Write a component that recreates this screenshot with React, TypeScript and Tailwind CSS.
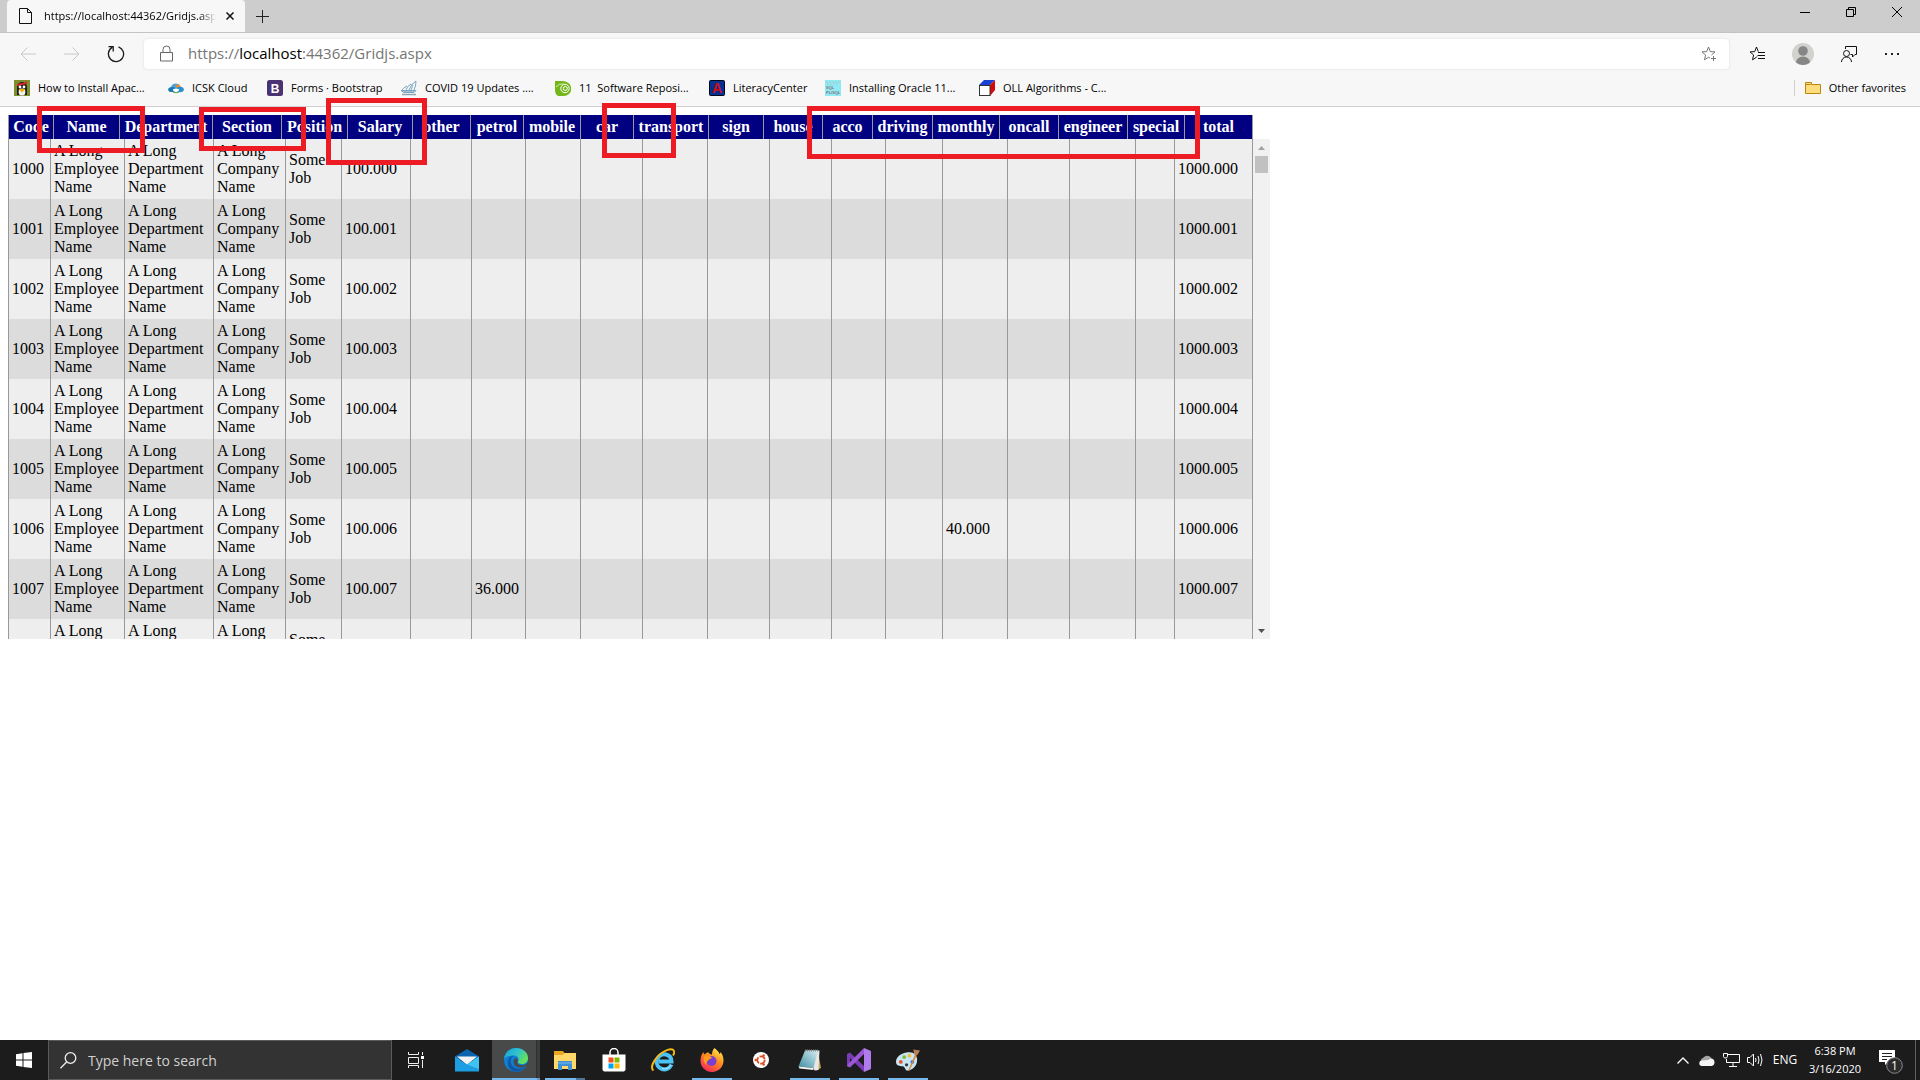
import React from 'react';

type Column = { label: string; head: string; body: string };

// header and body are separate tables, each with its own column widths
const columns: Column[] = [
  { label: 'Code', head: 'w-[45px]', body: 'w-[42px]' },
  { label: 'Name', head: 'w-[66px]', body: 'w-[74px]' },
  { label: 'Department', head: 'w-[93px]', body: 'w-[89px]' },
  { label: 'Section', head: 'w-[69px]', body: 'w-[72px]' },
  { label: 'Position', head: 'w-[66px]', body: 'w-[56px]' },
  { label: 'Salary', head: 'w-[65px]', body: 'w-[69px]' },
  { label: 'other', head: 'w-[58px]', body: 'w-[61px]' },
  { label: 'petrol', head: 'w-[53px]', body: 'w-[54px]' },
  { label: 'mobile', head: 'w-[57px]', body: 'w-[55px]' },
  { label: 'car', head: 'w-[53px]', body: 'w-[62px]' },
  { label: 'transport', head: 'w-[75px]', body: 'w-[65px]' },
  { label: 'sign', head: 'w-[55px]', body: 'w-[62px]' },
  { label: 'house', head: 'w-[59px]', body: 'w-[62px]' },
  { label: 'acco', head: 'w-[50px]', body: 'w-[54px]' },
  { label: 'driving', head: 'w-[60px]', body: 'w-[57px]' },
  { label: 'monthly', head: 'w-[67px]', body: 'w-[65px]' },
  { label: 'oncall', head: 'w-[59px]', body: 'w-[62px]' },
  { label: 'engineer', head: 'w-[69px]', body: 'w-[66px]' },
  { label: 'special', head: 'w-[57px]', body: 'w-[39px]' },
  { label: 'total', head: 'w-[69px]', body: 'w-[79px]' },
];

const rows = Array.from({ length: 9 }, (_, i) => {
  const values: Record<string, string> = {
    Code: `${1000 + i}`,
    Name: 'A Long Employee Name',
    Department: 'A Long Department Name',
    Section: 'A Long Company Name',
    Position: 'Some Job',
    Salary: `100.00${i}`,
    total: `1000.00${i}`,
  };
  if (i === 6) values.monthly = '40.000';
  if (i === 7) values.petrol = '36.000';
  return values;
});

const marks = [
  'left-[37px] top-[106px] w-[108px] h-[47px]',
  'left-[199px] top-[107px] w-[107px] h-[44px]',
  'left-[326px] top-[98px] w-[101px] h-[67px]',
  'left-[602px] top-[103px] w-[74px] h-[55px]',
  'left-[807px] top-[106px] w-[393px] h-[53px]',
];

const PenguinIcon = () => (
  <svg width="16" height="16" viewBox="0 0 16 16">
    <rect width="16" height="16" fill="#7d8f2a" />
    <path d="M3 15V7a5 5 0 0110 0v8z" fill="#1c1c1c" />
    <path d="M3 4l10-2v2L3 6z" fill="#d8262c" />
    <path d="M12 0l1 4-2 0z" fill="#d8262c" />
    <ellipse cx="8" cy="12" rx="3.4" ry="3.6" fill="#f2f2f2" />
    <circle cx="6" cy="7" r="1.4" fill="#fff" />
    <circle cx="10" cy="7" r="1.4" fill="#fff" />
    <path d="M4.5 9h7L8 12.500z" fill="#f5b301" />
  </svg>
);

const CloudLogo = () => (
  <svg width="16" height="16" viewBox="0 0 16 16">
    <path d="M3 8a4.5 4.5 0 018.5-2L8 10H3z" fill="#4aa3d8" />
    <path d="M7 6l4-2 2 3-3 2z" fill="#f08c2b" />
    <ellipse cx="4" cy="9.5" rx="3.8" ry="2.6" fill="#1679b8" />
    <ellipse cx="12" cy="9.5" rx="3.8" ry="2.7" fill="#2b8fd0" />
    <ellipse cx="8" cy="10" rx="3" ry="1.5" fill="#fff" />
    <path d="M5 12q3 1.5 6 0" stroke="#4b9b4a" fill="none" />
  </svg>
);

const BootstrapIcon = () => (
  <svg width="16" height="16" viewBox="0 0 16 16">
    <rect width="16" height="16" rx="2.5" fill="#4b3273" />
    <text x="8" y="12.5" fontSize="12" fontWeight="bold" fill="#fff" textAnchor="middle" fontFamily="Liberation Sans, sans-serif">B</text>
  </svg>
);

const ShipIcon = () => (
  <svg width="16" height="16" viewBox="0 0 16 16" fill="none" stroke="#7ea7bf">
    <path d="M15 1Q10 4 8 10M15 1Q15 6 13 10M10 4Q6 6 5 10M6 6Q2 8 1 10M11 4Q12 7 10 10" />
    <path d="M0 10.5h15l-2 2H3z" fill="#9fc0d2" />
    <path d="M1 14.5h14" stroke="#8ea6b4" strokeWidth="1.5" />
  </svg>
);

const EyeIcon = () => (
  <svg width="16" height="16" viewBox="0 0 16 16">
    <path d="M0 1h8q7 1 8 6v4q-2 5-8 5H3q-3-2-3-5z" fill="#74b71b" />
    <circle cx="10" cy="8.5" r="4.2" fill="none" stroke="#fff" />
    <circle cx="10.3" cy="8.5" r="2" fill="none" stroke="#fff" />
    <path d="M1 7q3-4 8-3" stroke="#d4edaa" fill="none" />
  </svg>
);

const LetterIcon = () => (
  <svg width="16" height="16" viewBox="0 0 16 16">
    <rect x=".5" y=".5" width="15" height="15" rx="1" fill="#06308f" stroke="#00061c" />
    <text x="8" y="13" fontSize="14" fontWeight="bold" fill="#d50b16" textAnchor="middle" fontFamily="Liberation Sans, sans-serif">A</text>
  </svg>
);

const SqlIcon = () => (
  <svg width="16" height="16" viewBox="0 0 16 16">
    <rect width="16" height="16" fill="#8eeaf5" />
    <path d="M1 2h14M2 4h12" stroke="#a9c9cf" strokeDasharray="2 1" />
    <text x="1" y="9" fontSize="4" fontWeight="bold" fill="#8b7377" fontFamily="Liberation Sans, sans-serif">SQL</text>
    <text x="1" y="14" fontSize="4" fontWeight="bold" fill="#8b7377" fontFamily="Liberation Sans, sans-serif">PL/SQL</text>
  </svg>
);

const CubeIcon = () => (
  <svg width="16" height="16" viewBox="0 0 16 16">
    <path d="M0 5L5 0h11l-5 5z" fill="#1b3fd1" />
    <path d="M11 5l5-5v10l-5 6z" fill="#d40a0a" />
    <rect x=".5" y="5.5" width="10.5" height="10" fill="#fff" stroke="#333" />
  </svg>
);

const bookmarks = [
  { label: 'How to Install Apac...', width: 'w-[154px]', icon: <PenguinIcon /> },
  { label: 'ICSK Cloud', width: 'w-[99px]', icon: <CloudLogo /> },
  { label: 'Forms · Bootstrap', width: 'w-[134px]', icon: <BootstrapIcon /> },
  { label: 'COVID 19 Updates ....', width: 'w-[154px]', icon: <ShipIcon /> },
  { label: '11  Software Reposi...', width: 'w-[154px]', icon: <EyeIcon /> },
  { label: 'LiteracyCenter', width: 'w-[116px]', icon: <LetterIcon /> },
  { label: 'Installing Oracle 11...', width: 'w-[154px]', icon: <SqlIcon /> },
  { label: 'OLL Algorithms - C...', width: 'w-[154px]', icon: <CubeIcon /> },
];

const TabStrip = () => (
  <div className="flex h-8 bg-[#cdcdcd] pl-[7px]">
    <div className="flex w-[238px] items-center rounded-t bg-[#f7f7f7] pl-3">
      <svg width="13" height="16" viewBox="0 0 13 16" fill="none" stroke="#111">
        <path d="M.5.5h8l4 4v11H.5zM8.5.5v4h4" />
      </svg>
      <div className="ml-3 w-[172px] overflow-hidden whitespace-nowrap text-[11px] text-black [mask-image:linear-gradient(to_right,black_90%,transparent)]">
        https://localhost:44362/Gridjs.aspx
      </div>
      <button aria-label="Close tab" className="ml-1.5 flex h-4 w-4 items-center justify-center">
        <svg width="8" height="8" viewBox="0 0 8 8" stroke="#111" strokeWidth="1.5">
          <path d="M.5.5l7 7M7.5.5l-7 7" />
        </svg>
      </button>
    </div>
    <button aria-label="New tab" className="flex w-[35px] items-center justify-center">
      <svg width="13" height="13" viewBox="0 0 13 13" stroke="#222">
        <path d="M6.5 0v13M0 6.5h13" />
      </svg>
    </button>
    <div className="ml-auto flex h-[23px]">
      <button aria-label="Minimize" className="flex w-[46px] items-center justify-center">
        <svg width="10" height="10" stroke="#000"><path d="M0 5.5h10" /></svg>
      </button>
      <button aria-label="Restore" className="flex w-[46px] items-center justify-center">
        <svg width="10" height="10" fill="none" stroke="#000">
          <path d="M.5 2.5h7v7h-7zM2.5 2V.5h7v7H8" />
        </svg>
      </button>
      <button aria-label="Close window" className="flex w-[46px] items-center justify-center">
        <svg width="10" height="10" stroke="#000"><path d="M0 0l10 10M10 0L0 10" /></svg>
      </button>
    </div>
  </div>
);

const Toolbar = () => (
  <div className="flex h-[42px] items-center border-t border-[#c3c3c3] bg-[#f7f7f7] pl-1.5 pr-2">
    <button aria-label="Back" className="flex w-11 justify-center">
      <svg width="16" height="14" viewBox="0 0 16 14" fill="none" stroke="#c8c8c8">
        <path d="M16 7H1M7.5.5L1 7l6.5 6.5" />
      </svg>
    </button>
    <button aria-label="Forward" className="flex w-11 justify-center">
      <svg width="16" height="14" viewBox="0 0 16 14" fill="none" stroke="#c8c8c8">
        <path d="M0 7h15M8.5.5L15 7l-6.5 6.5" />
      </svg>
    </button>
    <button aria-label="Refresh" className="flex w-11 justify-center">
      <svg width="18" height="18" viewBox="0 0 18 18" fill="none" stroke="#1b1b1b" strokeWidth="1.3">
        <path d="M11.5 1.8a7.600 7.600 0 11-6.300.6M1.500 1.700h4.700v4.700" />
      </svg>
    </button>
    <div className="ml-1.5 flex h-[30px] flex-1 items-center rounded bg-white pl-4 pr-3 shadow-[0_0_3px_#dddddd]">
      <svg width="13" height="17" viewBox="0 0 13 17" fill="none" stroke="#666">
        <path d="M.5 7.5h12V16H.5zM3 7V4.5a3.5 3.5 0 017 0V7" />
      </svg>
      <div className="ml-[15px] text-[15px] text-[#757575]">
        https://<span className="text-black">localhost</span>:44362/Gridjs.aspx
      </div>
      <button aria-label="Add to favorites" className="ml-auto">
        <svg width="16" height="16" viewBox="0 0 16 16" fill="none" stroke="#767676">
          <path d="M10.5 9L14 5.9l-4.700-.3L7.5 1 5.700 5.600 1 5.900 4.600 9l-1.100 4.800 4-2.600 1.500 1M12.5 10v5M10 12.500h5" />
        </svg>
      </button>
    </div>
    <div className="ml-[5px] flex items-center">
      <button aria-label="Favorites" className="flex w-[46px] justify-center">
        <svg width="16" height="16" viewBox="0 0 16 16" fill="none" stroke="#111">
          <path d="M8 10.5l-.5.7-4 2.600 1.100-4.800L1 5.900l4.700-.3L7.500 1l1.800 4.600M9 6.500h7M8.500 9.500H16M9 12.500h7" />
        </svg>
      </button>
      <button aria-label="Profile" className="flex w-[46px] justify-center">
        <svg width="22" height="22" viewBox="0 0 22 22">
          <circle cx="11" cy="11" r="11" fill="#d1d1ce" />
          <circle cx="11" cy="8" r="4.8" fill="#868686" />
          <path d="M4 19.500a7 6 0 0114 0A11 11 0 014 19.500z" fill="#868686" />
        </svg>
      </button>
      <button aria-label="Send feedback" className="flex w-[46px] justify-center">
        <svg width="16" height="16" viewBox="0 0 16 16" fill="none" stroke="#111">
          <circle cx="5.5" cy="7.5" r="3" />
          <path d="M.5 16a5 5 0 0110 0M4.5 3V.5h11v8H14L11.500 11V8.500H9.500" />
        </svg>
      </button>
      <button aria-label="Settings and more" className="flex w-10 justify-center">
        <svg width="14" height="2" fill="#222">
          <rect width="2" height="2" />
          <rect x="6" width="2" height="2" />
          <rect x="12" width="2" height="2" />
        </svg>
      </button>
    </div>
  </div>
);

const BookmarksBar = () => (
  <div className="flex h-[33px] items-start border-b border-[#d0d0d0] bg-[#f7f7f7] px-3.5 pt-1.5 text-[11px] text-black">
    {bookmarks.map((b) => (
      <a key={b.label} href="#" className={`flex h-4 items-center gap-2 whitespace-pre ${b.width}`}>
        {b.icon}
        {b.label}
      </a>
    ))}
    <a href="#" className="ml-auto flex h-4 items-center gap-2 border-l border-[#cfcfcf] pl-2.5">
      <svg width="16" height="12" viewBox="0 0 16 12" fill="#ffdc7d" stroke="#b8860b">
        <path d="M.5 2.5V.5h6v2h9v9H.5z" />
        <path d="M.5 2.5h5l1-1" fill="none" />
      </svg>
      Other favorites
    </a>
  </div>
);

const EmployeeGrid = () => (
  <div className="m-2 w-[1262px] font-['Liberation_Serif',serif] text-base leading-[18px] text-black">
    <table className="w-[1245px] table-fixed border-separate border-spacing-0 bg-[#000080]">
      <thead>
        <tr>
          {columns.map((c) => (
            <th key={c.label} className={`h-6 border-l border-[#999999] p-0 text-center font-bold text-white last:border-r ${c.head}`}>
              {c.label}
            </th>
          ))}
        </tr>
      </thead>
    </table>
    <div className="flex h-[500px] overflow-hidden">
      <table className="w-[1245px] shrink-0 table-fixed self-start border-separate border-spacing-0">
        <tbody>
          {rows.map((row) => (
            <tr key={row.Code} className="bg-[#eeeeee] even:bg-[#dcdcdc]">
              {columns.map((c) => (
                <td key={c.label} className={`h-[60px] border-l border-[#999999] p-[3px] align-middle last:border-r ${c.body}`}>
                  {row[c.label]}
                </td>
              ))}
            </tr>
          ))}
        </tbody>
      </table>
      <div className="flex w-[17px] flex-col items-center bg-[#f1f1f1]">
        <button aria-label="Scroll up" className="flex h-[17px] items-center">
          <svg width="7" height="4" fill="#a3a3a3"><path d="M0 4L3.5 0 7 4z" /></svg>
        </button>
        <div className="h-[17px] w-[13px] bg-[#c1c1c1]" />
        <button aria-label="Scroll down" className="mt-auto flex h-[17px] items-center">
          <svg width="7" height="4" fill="#505050"><path d="M0 0h7L3.5 4z" /></svg>
        </button>
      </div>
    </div>
  </div>
);

const MailIcon = () => (
  <svg width="24" height="24" viewBox="0 0 24 24">
    <path d="M0 8.5L12 1l12 7.5V12H0z" fill="#0b64b0" />
    <path d="M2 8.5h20L12 17z" fill="#f3f3f3" />
    <path d="M0 8.5l12 8 12-8v15H0z" fill="#1d9de2" />
    <path d="M12 16.5l12-8V21z" fill="#3fc3f2" />
  </svg>
);

const EdgeIcon = () => (
  <svg width="24" height="24" viewBox="0 0 24 24">
    <defs>
      <linearGradient id="edgeTop" x1="0" x2="1" y1="0" y2=".5">
        <stop offset="0" stopColor="#1a9fd8" />
        <stop offset=".55" stopColor="#2fc1cf" />
        <stop offset="1" stopColor="#66e05a" />
      </linearGradient>
    </defs>
    <circle cx="12" cy="12" r="12" fill="#0d7fd6" />
    <path d="M0 11C1 4 6 0 12 0c7 0 12 4.5 12 10 0 4-3 6-6 6-3.500 0-4.500-1.500-4-2.500 1.500-2 .5-6-4-6C5 7.500 1 9 0 11z" fill="url(#edgeTop)" />
    <path d="M10 7.600c-4 2-4.500 7-1.500 10.400 3 3.400 9 3.500 13.500.5-3 4-8 6-12 5C5 21.500 3 17 4 13c.8-3 3-5 6-5.400z" fill="#1457a0" />
    <path d="M13.500 14c-.5 2 2 3.500 5 3.300 2.500-.2 4.500-1.300 5.500-3.300v5l-2-.7c-3 1.800-8 2-11-.8-2-2-2-6 .5-7.500 2 .5 3 2.500 2 4z" fill="#484a4a" />
  </svg>
);

const FolderIcon = () => (
  <svg width="22" height="19" viewBox="0 0 22 19">
    <path d="M0 0h9l1.500 2H22v16H0z" fill="#e8a820" />
    <path d="M0 4h9l1.500-2H22v16H0z" fill="#ffd869" />
    <path d="M4 19v-9h14v9h-4v-4H8v4z" fill="#3f91d6" />
    <path d="M4 12h14" stroke="#7db9ec" />
  </svg>
);

const StoreIcon = () => (
  <svg width="24" height="24" viewBox="0 0 24 24">
    <path d="M8 7V4.500a4 4 0 018 0V7" fill="none" stroke="#fff" strokeWidth="1.5" />
    <path d="M.5 6.500h23V22L22 23.500H2L.5 22z" fill="#fff" />
    <path d="M6.500 9.500h5v5h-5z" fill="#f25022" />
    <path d="M12.500 9.500h5v5h-5z" fill="#7fba00" />
    <path d="M6.500 15.500h5v5h-5z" fill="#00a4ef" />
    <path d="M12.500 15.500h5v5h-5z" fill="#ffb900" />
  </svg>
);

const ExplorerIcon = () => (
  <svg width="24" height="24" viewBox="0 0 24 24" fill="none">
    <path d="M20.500 16.500C18.500 21 14 22 11 21c-4-1.300-6-5-5-9s5-6.500 9-5.500c4 1 5.500 4 5.500 7H8" stroke="#4cc2f5" strokeWidth="4" />
    <path d="M20 17C18 20.500 14 21.500 11 20.500" stroke="#c6f0ff" />
    <path d="M2.500 22.500C-2 19 5 8 13 3.500c5-3 9-3 10-.5.5 1.500 0 3-1 4.500" stroke="#f4b916" strokeWidth="2" />
  </svg>
);

const FirefoxIcon = () => (
  <svg width="24" height="24" viewBox="0 0 24 24">
    <defs>
      <linearGradient id="ffBody" x1=".8" x2=".2" y1="0" y2="1">
        <stop offset="0" stopColor="#fff04a" />
        <stop offset=".45" stopColor="#ff8a1f" />
        <stop offset="1" stopColor="#f3215f" />
      </linearGradient>
    </defs>
    <path d="M14.500 0c3 2.500 4.500 4 5 6 1-.5 1-2 1-2 2 2.500 3 5.500 3 8.500 0 6.500-5 11.500-11.500 11.500S.5 19 .5 13c0-4 1-7 3-9 0 1 .5 2 1 2.500C6 5 7 4.500 8.500 4.500c1 1.500 2 2 3.500 2 0-3 1-5 2.500-6.500z" fill="url(#ffBody)" />
    <circle cx="11.5" cy="13" r="5" fill="#7a3fd0" />
    <path d="M4.500 8c3-1 6 0 8 2-2 0-3 1-4.500 2.500-1 1-2 2.500-1.500 4.500C3 14 3.500 11 4.500 8z" fill="#ff9b1a" />
  </svg>
);

const UbuntuIcon = () => (
  <svg width="16" height="16" viewBox="0 0 16 16">
    <circle cx="8" cy="8" r="8" fill="#fff" />
    <circle cx="8" cy="8" r="3.7" fill="none" stroke="#df4b1f" strokeWidth="1.8" strokeDasharray="6.5 1.25" />
    <circle cx="2.8" cy="8" r="1.3" fill="#df4b1f" />
    <circle cx="10.6" cy="3.5" r="1.3" fill="#df4b1f" />
    <circle cx="10.6" cy="12.5" r="1.3" fill="#df4b1f" />
  </svg>
);

const NotepadIcon = () => (
  <svg width="24" height="24" viewBox="0 0 24 24">
    <defs>
      <linearGradient id="padPaper" x1="0" x2="1" y1="1" y2="0">
        <stop offset="0" stopColor="#3f8ea3" />
        <stop offset="1" stopColor="#d6edf2" />
      </linearGradient>
    </defs>
    <path d="M20 4l3 16-5 2.500z" fill="#c9a25c" />
    <path d="M8 2.500h13.500l-1 19.500-4 .5z" fill="#e8e8e8" />
    <path d="M7 2.500h13L15.500 20 .5 18.500z" fill="url(#padPaper)" />
    <path d="M7 2.500h13" stroke="#888" strokeWidth="2" strokeDasharray="1 1" />
    <path d="M.5 18.500l15 1.500v2l-14-1.500z" fill="#f2f2f2" />
  </svg>
);

const VisualStudioIcon = () => (
  <svg width="24" height="24" viewBox="0 0 24 24">
    <path d="M17 0l7 3v18l-7 3z" fill="#b07cec" />
    <path d="M0 6l3-1.500L17 18v6L3 10v7.500l-1 1.500-2-1z" fill="#7a3bb8" />
    <path d="M17 0v6L3 19.500 0 18l1-2z" fill="#9b57d8" />
  </svg>
);

const PaintIcon = () => (
  <svg width="24" height="24" viewBox="0 0 25 24">
    <path d="M12 4c6-1 10 2 10 8 0 7-6 11-10 11-3 0-2-4-5-4.500S0 18 0 14C0 9 5 5 12 4z" fill="#c9e4f2" />
    <circle cx="5" cy="14" r="2" fill="#e2572b" />
    <circle cx="8.5" cy="9" r="2" fill="#7abf3c" />
    <circle cx="14" cy="7.5" r="2" fill="#f1c232" />
    <circle cx="11" cy="17" r="1.7" fill="#2b3a44" />
    <circle cx="17" cy="14" r="2" fill="#3d7edb" />
    <path d="M20 6l1.500 1L14 23l-1.500.5z" fill="#d98a34" />
    <path d="M18 1l7 1-3 5-3-1z" fill="#b98056" />
  </svg>
);

// bar: underline of an open app, darker at the end when it has several windows
const apps = [
  { name: 'Mail', icon: <MailIcon />, cell: '', bar: '' },
  {
    name: 'Microsoft Edge',
    icon: <EdgeIcon />,
    cell: 'bg-[linear-gradient(to_right,#484a4a_44px,#2e2f2f_44px,#2e2f2f_45px,#3b3d3d_45px)]',
    bar: 'w-12 bg-[linear-gradient(to_right,#76b9ed_45px,#5f95c0_45px)]',
  },
  {
    name: 'File Explorer',
    icon: <FolderIcon />,
    cell: '',
    bar: 'w-10 bg-[linear-gradient(to_right,#76b9ed_31px,#4d7699_31px)]',
  },
  { name: 'Microsoft Store', icon: <StoreIcon />, cell: '', bar: '' },
  { name: 'Internet Explorer', icon: <ExplorerIcon />, cell: '', bar: '' },
  { name: 'Firefox', icon: <FirefoxIcon />, cell: '', bar: 'w-10 bg-[#76b9ed]' },
  { name: 'Ubuntu', icon: <UbuntuIcon />, cell: '', bar: '' },
  { name: 'Notepad', icon: <NotepadIcon />, cell: '', bar: 'w-10 bg-[#76b9ed]' },
  { name: 'Visual Studio', icon: <VisualStudioIcon />, cell: '', bar: 'w-10 bg-[#76b9ed]' },
  { name: 'Paint', icon: <PaintIcon />, cell: '', bar: 'w-10 bg-[#76b9ed]' },
];

const Taskbar = () => (
  <div className="flex h-10 bg-[#1c1c1c] text-white">
    <button aria-label="Start" className="flex w-12 items-center justify-center">
      <svg width="16" height="16" viewBox="0 0 16 16" fill="#fff">
        <path d="M0 2.2l6.500-.9v6.200H0zM7.500 1.100L16 0v7.500H7.500zM0 8.500h6.500v6.200L0 13.800zM7.500 8.500H16V16l-8.500-1.100z" />
      </svg>
    </button>
    <label className="flex w-[344px] items-center border border-[#5a5a5a] bg-[#333333] pl-[11px]">
      <svg width="17" height="17" viewBox="0 0 17 17" fill="none" stroke="#eee" strokeWidth="1.3">
        <circle cx="10.5" cy="6" r="5.3" />
        <path d="M6.800 9.800L.5 16.200" />
      </svg>
      <input
        type="text"
        aria-label="Search"
        placeholder="Type here to search"
        className="ml-[11px] flex-1 bg-transparent text-[14px] placeholder:text-[#d0d0d0]"
      />
    </label>
    <button aria-label="Task View" className="flex w-12 items-center justify-center">
      <svg width="16" height="16" viewBox="0 0 16 16" fill="none" stroke="#eee">
        <path d="M.5 0v2.500h10V0M.5 5.500h10v6H.5zM.5 16v-2.500h10V16M14.500 0v3M14.500 8v8" />
        <path d="M13 4h3v3h-3z" fill="#fff" stroke="none" />
      </svg>
    </button>
    <div className="ml-[3px] flex gap-px">
      {apps.map((app) => (
        <button key={app.name} aria-label={app.name} className={`flex w-12 flex-col items-center ${app.cell}`}>
          <span className="flex h-[38px] items-center pt-0.5">{app.icon}</span>
          {app.bar && <span className={`h-0.5 ${app.bar}`} />}
        </button>
      ))}
    </div>
    <div className="ml-auto flex items-center text-[11px] leading-[18px]">
      <button aria-label="Show hidden icons" className="flex w-6 justify-center">
        <svg width="12" height="7" fill="none" stroke="#fff" strokeWidth="1.3"><path d="M.5 6.500L6 1l5.500 5.500" /></svg>
      </button>
      <button aria-label="OneDrive" className="flex w-6 justify-center">
        <svg width="16" height="11" viewBox="0 0 16 11">
          <path d="M2 7a3 3 0 012-4 5 5 0 018-.5L13 6z" fill="#a5a5a5" />
          <path d="M3 11a2.700 2.700 0 010-5.400L9 5l3-1.500A3.800 3.800 0 0112.500 11z" fill="#f5f5f5" />
        </svg>
      </button>
      <button aria-label="Network" className="flex w-6 justify-center">
        <svg width="17" height="14" viewBox="0 0 17 14" fill="none" stroke="#fff">
          <path d="M5 1.500h11.500v8H3.500V6M10 9.500v4M6 13.500h8M.5.5h4v3l-1 1.500h-2L.5 3.500z" />
        </svg>
      </button>
      <button aria-label="Volume" className="flex w-6 justify-center">
        <svg width="17" height="14" viewBox="0 0 17 14" fill="none" stroke="#fff">
          <path d="M.5 4.500H3L6.500 1v12L3 9.500H.5zM8.500 5q1 2 0 4M11 3q2 4 0 8M13.500 1q3 6 0 12" />
        </svg>
      </button>
      <button className="w-9 text-[12px]">ENG</button>
      <button className="w-16 whitespace-nowrap text-center">
        6:38 PM
        <br />
        3/16/2020
      </button>
      <button aria-label="Notifications" className="flex h-10 w-12 items-center justify-center pt-1">
        <svg width="24" height="24" viewBox="0 0 24 24">
          <path d="M0 0h16v12H9l-3 3v-3H0z" fill="#fff" />
          <path d="M3 3.500h10M3 6.500h10M3 9.500h5" stroke="#222" />
          <circle cx="15.5" cy="15.5" r="7.8" fill="#2b2b2b" stroke="#8a8a8a" />
          <text x="15.5" y="20" fontSize="12" fill="#fff" textAnchor="middle">1</text>
        </svg>
      </button>
      <span className="h-10 w-[5px] border-l border-[#5f5f5f]" />
    </div>
  </div>
);

const App: React.FC = () => {
  return (
    <div className="relative flex min-h-screen flex-col bg-white font-['Open_Sans','Noto_Sans',sans-serif]">
      <TabStrip />
      <Toolbar />
      <BookmarksBar />
      <main className="flex-1">
        <EmployeeGrid />
      </main>
      <Taskbar />
      {marks.map((m) => (
        <div key={m} className={`pointer-events-none absolute border-5 border-[#ed1c24] ${m}`} />
      ))}
    </div>
  );
};

export default App;
